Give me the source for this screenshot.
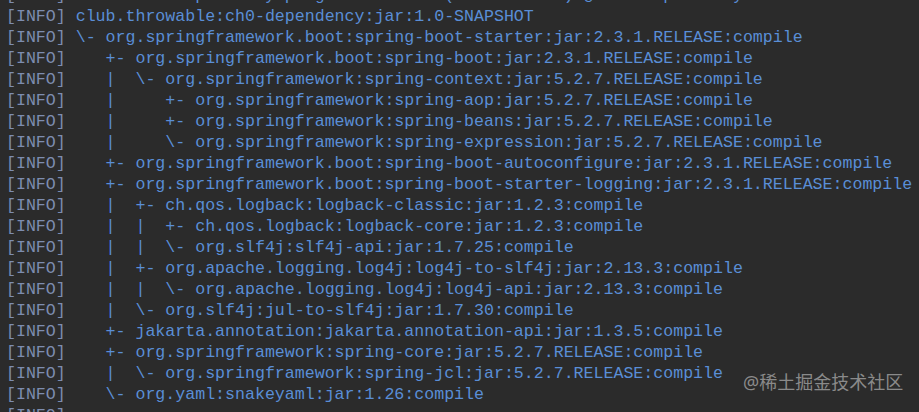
const lines = [
  ' --- maven-dependency-plugin:2.8:tree (default-cli) @ ch0-dependency ---',
  ' club.throwable:ch0-dependency:jar:1.0-SNAPSHOT',
  ' \\- org.springframework.boot:spring-boot-starter:jar:2.3.1.RELEASE:compile',
  '    +- org.springframework.boot:spring-boot:jar:2.3.1.RELEASE:compile',
  '    |  \\- org.springframework:spring-context:jar:5.2.7.RELEASE:compile',
  '    |     +- org.springframework:spring-aop:jar:5.2.7.RELEASE:compile',
  '    |     +- org.springframework:spring-beans:jar:5.2.7.RELEASE:compile',
  '    |     \\- org.springframework:spring-expression:jar:5.2.7.RELEASE:compile',
  '    +- org.springframework.boot:spring-boot-autoconfigure:jar:2.3.1.RELEASE:compile',
  '    +- org.springframework.boot:spring-boot-starter-logging:jar:2.3.1.RELEASE:compile',
  '    |  +- ch.qos.logback:logback-classic:jar:1.2.3:compile',
  '    |  |  +- ch.qos.logback:logback-core:jar:1.2.3:compile',
  '    |  |  \\- org.slf4j:slf4j-api:jar:1.7.25:compile',
  '    |  +- org.apache.logging.log4j:log4j-to-slf4j:jar:2.13.3:compile',
  '    |  |  \\- org.apache.logging.log4j:log4j-api:jar:2.13.3:compile',
  '    |  \\- org.slf4j:jul-to-slf4j:jar:1.7.30:compile',
  '    +- jakarta.annotation:jakarta.annotation-api:jar:1.3.5:compile',
  '    +- org.springframework:spring-core:jar:5.2.7.RELEASE:compile',
  '    |  \\- org.springframework:spring-jcl:jar:5.2.7.RELEASE:compile',
  '    \\- org.yaml:snakeyaml:jar:1.26:compile',
  ' ------------------------------------------------------------------------',
];

function App() {
  return (
    <div className="relative h-[412px] w-[919px] overflow-hidden bg-[#2b2b2b] font-['Liberation_Mono',monospace] text-[16.6px] leading-[21px]">
      <div className="-mt-[15px] pl-[6px]">
        {lines.map((line, i) => (
          <div key={i} className="whitespace-pre">
            <span className="text-[#7d8db0]">[INFO]</span>
            <span className="text-[#5a8ed6]">{line}</span>
          </div>
        ))}
      </div>
      <div className="absolute left-[743px] top-[370px] font-['Noto_Sans','Noto_Sans_CJK_SC',sans-serif] text-[18px] leading-[24px] text-[#8a8a8a]">
        @稀土掘金技术社区
      </div>
    </div>
  );
}

export default App;
